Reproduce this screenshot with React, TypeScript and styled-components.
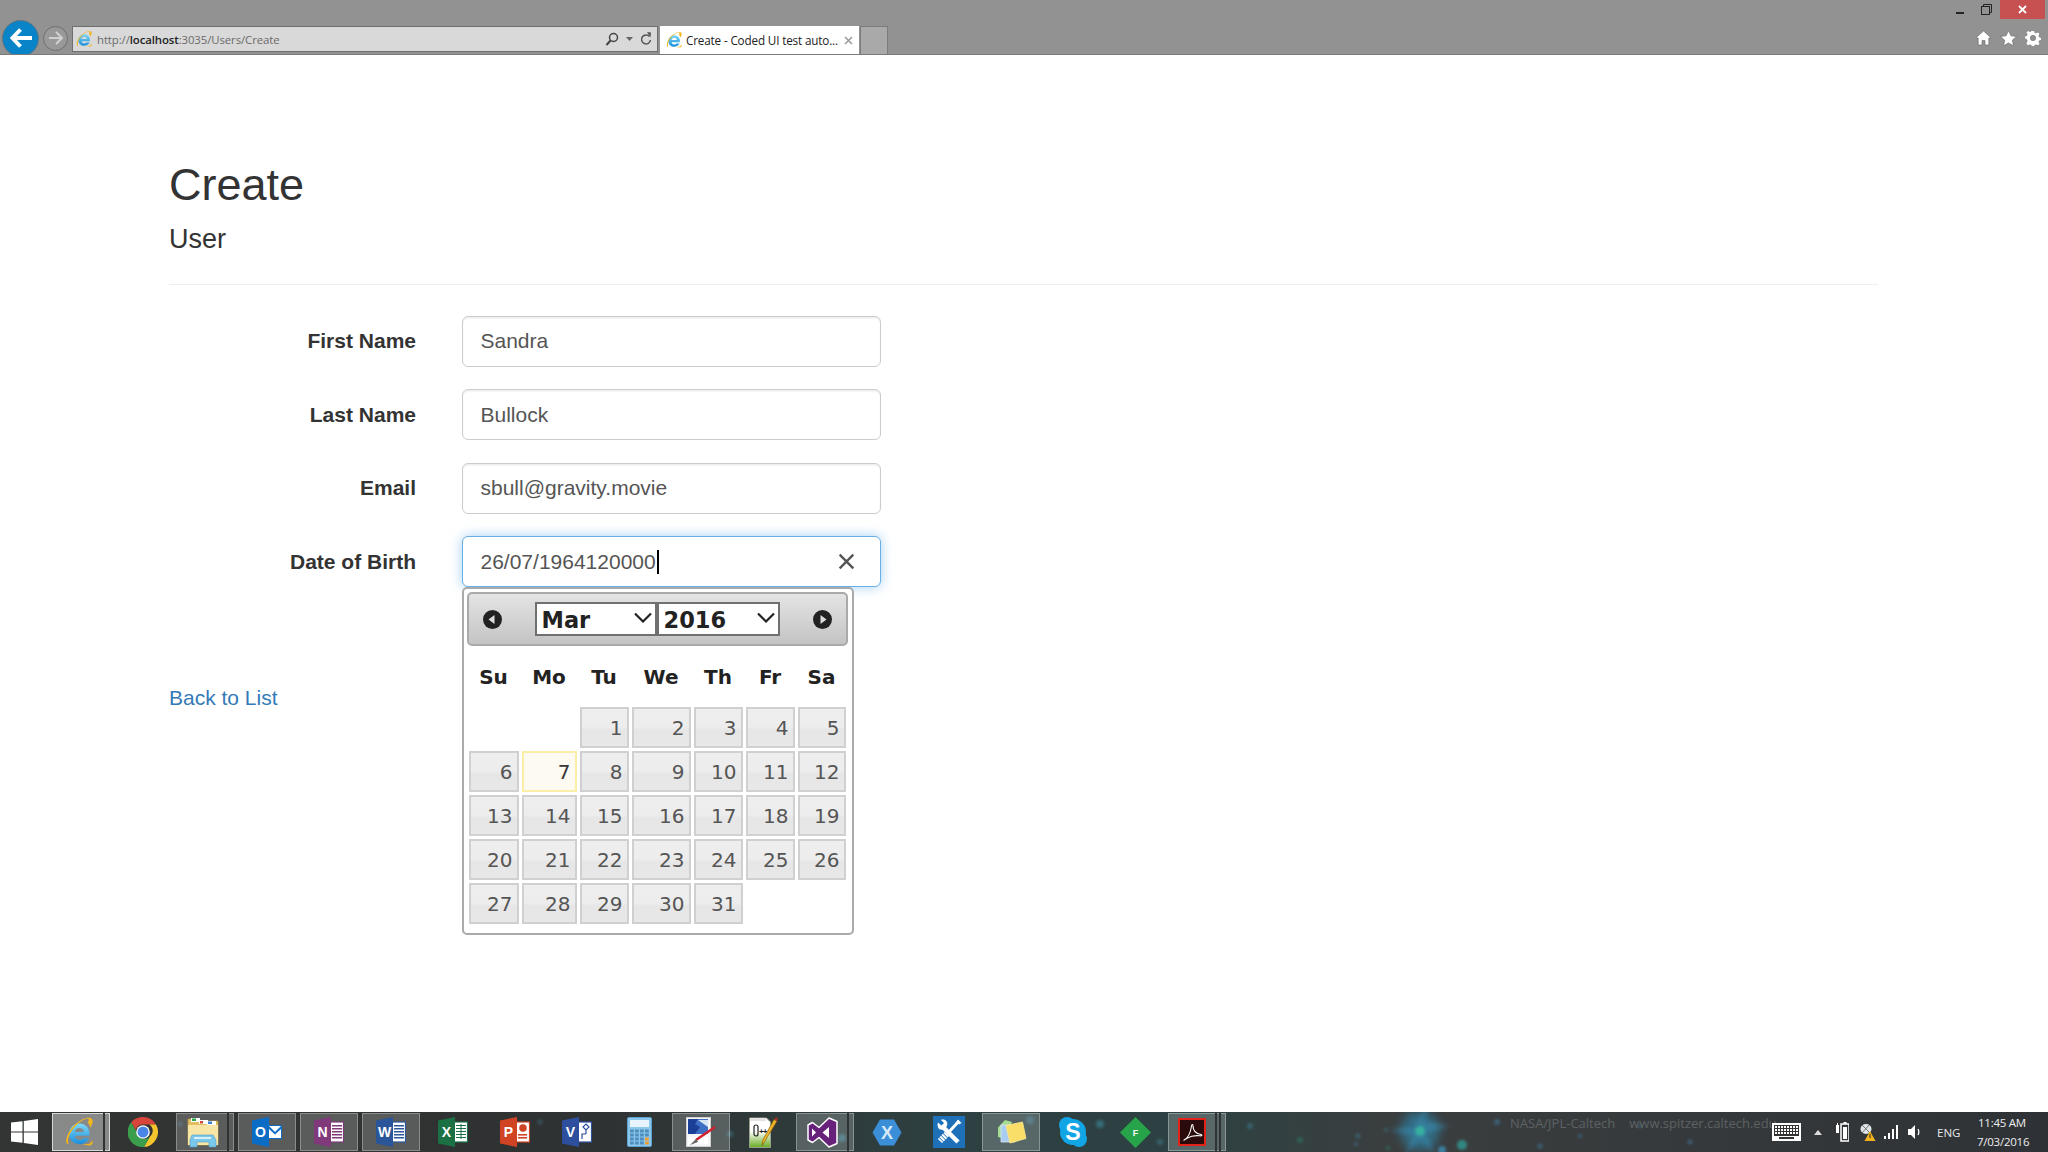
import React from "react";
import styled, { createGlobalStyle } from "styled-components";

const Global = createGlobalStyle`
  html, body { margin: 0; padding: 0; height: 100%; background: #fff; overflow: hidden; }
  #root { height: 100%; }
  * { box-sizing: border-box; }
`;

const Page = styled.div`
  height: 1152px;
  display: flex;
  flex-direction: column;
  font-family: "Liberation Sans", Arial, sans-serif;
  color: #333;
`;

/* ---------- browser chrome ---------- */
const Chrome = styled.header`
  position: relative;
  height: 55px;
  flex: none;
  background: #929292;
  border-bottom: 1px solid #7a7a7a;
  display: flex;
  align-items: flex-end;
  padding-left: 1px;
  overflow: hidden;
`;
const NavGroup = styled.div`
  display: flex;
  align-items: center;
  height: 32px;
  width: 71px;
  flex: none;
`;
const BackButton = styled.div`
  width: 37px;
  height: 37px;
  margin-left: 1px;
  border-radius: 50%;
  background: #0a84c8;
  border: 1.5px solid #66757c;
  display: flex;
  align-items: center;
  justify-content: center;
  flex: none;
`;
const ForwardButton = styled.div`
  width: 25px;
  height: 25px;
  margin-left: 4px;
  border-radius: 50%;
  background: #999;
  border: 1.5px solid #6f6f6f;
  display: flex;
  align-items: center;
  justify-content: center;
  flex: none;
`;
const AddressBar = styled.div`
  width: 586px;
  height: 26px;
  margin-bottom: 2px;
  background: #d9d9d9;
  border: 1px solid #6e6e6e;
  display: flex;
  align-items: center;
  padding: 0 5px 0 2px;
  gap: 4px;
  flex: none;
`;
const UrlText = styled.div`
  flex: 1;
  font-family: "Open Sans", sans-serif;
  font-size: 11.4px;
  letter-spacing: -0.1px;
  color: #6a6a6a;
  b { font-weight: 600; color: #222; }
`;
const BarTools = styled.div`
  display: flex;
  align-items: center;
  gap: 7px;
`;
const TabItem = styled.div`
  margin-left: 2px;
  width: 199px;
  height: 28px;
  background: #fff;
  display: flex;
  align-items: center;
  padding: 0 6px 0 5px;
  gap: 3px;
  flex: none;
`;
const TabTitle = styled.div`
  flex: 1;
  font-family: "Open Sans", sans-serif;
  font-size: 11.7px;
  letter-spacing: -0.15px;
  color: #222;
  white-space: nowrap;
`;
const NewTab = styled.div`
  margin-left: 1px;
  width: 28px;
  height: 28px;
  background: #a9a9a9;
  border: 1px solid #7c7c7c;
  border-bottom: none;
  flex: none;
`;
const WindowControls = styled.div`
  position: absolute;
  top: 0;
  right: 3px;
  display: flex;
  align-items: flex-start;
`;
const ControlBtn = styled.div`
  width: 26px;
  height: 19px;
  display: flex;
  align-items: center;
  justify-content: center;
`;
const CloseBtn = styled.div`
  width: 45px;
  height: 19px;
  margin-left: 1px;
  background: #c75050;
  display: flex;
  align-items: center;
  justify-content: center;
`;
const ToolIcons = styled.div`
  position: absolute;
  right: 7px;
  top: 30px;
  display: flex;
  gap: 8px;
  align-items: center;
`;

/* ---------- page ---------- */
const Main = styled.main`
  flex: 1;
  padding: 105px 170px 0 169px;
`;
const Title = styled.h2`
  margin: 0;
  font-size: 45px;
  font-weight: 400;
  line-height: 49.5px;
  color: #333;
`;
const Subtitle = styled.h4`
  margin: 15px 0 0;
  font-size: 27px;
  font-weight: 400;
  line-height: 29.7px;
  color: #333;
`;
const Rule = styled.hr`
  margin: 30px 0 30.5px;
  border: none;
  border-top: 1.5px solid #eee;
`;
const Form = styled.form`
  display: flex;
  flex-direction: column;
  gap: 22.5px;
`;
const Row = styled.div`
  display: grid;
  grid-template-columns: 247px 419px;
  column-gap: 45.5px;
  align-items: center;
`;
const Label = styled.label`
  font-size: 21px;
  font-weight: 700;
  text-align: right;
  color: #333;
`;
const Input = styled.input`
  width: 100%;
  height: 51px;
  padding: 0 18px;
  font: 400 21px "Liberation Sans", Arial, sans-serif;
  color: #555;
  background: #fff;
  border: 1.5px solid #ccc;
  border-radius: 6px;
  box-shadow: inset 0 1.5px 1.5px rgba(0, 0, 0, 0.075);
  outline: none;
`;
const DateWrap = styled.div`
  position: relative;
`;
const DateField = styled.div`
  height: 51px;
  padding: 0 18px;
  font-size: 21px;
  color: #555;
  background: #fff;
  border: 1.5px solid #66afe9;
  border-radius: 6px;
  box-shadow: 0 0 12px rgba(102, 175, 233, 0.6);
  display: flex;
  align-items: center;
`;
const Caret = styled.span`
  display: inline-block;
  width: 2px;
  height: 24px;
  background: #000;
  margin-left: 1px;
`;
const ClearIcon = styled.svg`
  margin-left: auto;
  margin-right: 7px;
  width: 17px;
  height: 17px;
  flex: none;
`;
const BackLink = styled.a`
  display: block;
  margin-top: 96px;
  font-size: 21px;
  line-height: 30px;
  color: #337ab7;
  text-decoration: none;
`;

/* ---------- datepicker ---------- */
const Calendar = styled.div`
  position: absolute;
  left: 0;
  top: 100%;
  width: 392px;
  height: 348px;
  background: #fff;
  border: 2px solid #aaa;
  border-radius: 5px;
  padding: 3px 4px 3px 3px;
  font-family: "DejaVu Sans", Verdana, sans-serif;
  z-index: 2;
`;
const CalHeader = styled.div`
  height: 54px;
  border: 2px solid #aaa;
  border-radius: 5px;
  background: linear-gradient(#e4e4e4, #c4c4c4);
  display: flex;
  align-items: center;
  justify-content: space-between;
  padding: 0 14px;
`;
const SelectGroup = styled.div`
  display: flex;
`;
const SelectWrap = styled.div`
  position: relative;
  width: ${(p) => p.$w}px;
  height: 34px;
`;
const Select = styled.select`
  appearance: none;
  width: 100%;
  height: 100%;
  padding: 2px 0 0 5px;
  border: 2px solid #707070;
  border-radius: 0;
  background: #fff;
  font: 700 22.5px "DejaVu Sans", Verdana, sans-serif;
  color: #222;
  outline: none;
`;
const Chevron = styled.svg`
  position: absolute;
  right: 5px;
  top: 10px;
  width: 18px;
  height: 11px;
  pointer-events: none;
`;
const Grid = styled.div`
  display: grid;
  grid-template-columns: 50px 55px 49px 59px 49px 49px 48px;
  column-gap: 3px;
  margin-left: 2px;
`;
const WeekHead = styled(Grid)`
  margin-top: 9px;
  margin-bottom: 8px;
`;
const Weekday = styled.div`
  height: 44px;
  display: flex;
  align-items: center;
  justify-content: center;
  font-size: 20px;
  font-weight: 700;
  color: #222;
`;
const DayGrid = styled(Grid)`
  grid-auto-rows: 41px;
  row-gap: 3px;
`;
const Day = styled.div`
  display: flex;
  align-items: center;
  justify-content: flex-end;
  padding-right: 4px;
  font-size: 20px;
  color: ${(p) => (p.$today ? "#363636" : "#555")};
  border: 2px solid ${(p) => (p.$today ? "#fbeea6" : "#d0d0d0")};
  background: ${(p) =>
    p.$today
      ? "#fcfaf1"
      : "linear-gradient(#eeeeee 0%, #ededed 48%, #e6e6e6 58%, #e8e8e8 100%)"};
`;
const DayBlank = styled.div``;

/* ---------- taskbar ---------- */
const Taskbar = styled.footer`
  position: relative;
  height: 40px;
  flex: none;
  display: flex;
  align-items: stretch;
  overflow: hidden;
  background: linear-gradient(
    to right,
    #333434 0,
    #2f3232 600px,
    #2e4041 950px,
    #2e4142 1200px,
    #3b3e3f 1400px,
    #36393b 1700px,
    #2e3236 2048px
  );
`;
const Stars = styled.svg`
  position: absolute;
  left: 0;
  top: 0;
  width: 2048px;
  height: 40px;
  pointer-events: none;
`;
const Wallpaper = styled.div`
  position: absolute;
  left: 1510px;
  top: 2px;
  display: flex;
  gap: 14px;
  font-family: "Open Sans", sans-serif;
  font-size: 13px;
  color: #5c6264;
  white-space: nowrap;
`;
const StartButton = styled.div`
  position: relative;
  width: 48px;
  flex: none;
  display: flex;
  align-items: center;
  justify-content: center;
`;
const TaskItems = styled.div`
  position: relative;
  display: flex;
  gap: 4px;
  margin-left: 4px;
  padding: 1px 0;
`;
const TaskItem = styled.div`
  position: relative;
  width: 58px;
  display: flex;
  align-items: center;
  justify-content: center;
  padding-right: ${(p) => (p.$stack ? p.$stack * 5 : 0)}px;
  background: ${(p) =>
    p.$active ? "rgba(255,255,255,.42)" : p.$running ? "rgba(255,255,255,.2)" : "transparent"};
  border: ${(p) =>
    p.$active ? "1.5px solid #d8d8d8" : p.$running ? "1.5px solid rgba(255,255,255,.3)" : "none"};
`;
const StackEdge = styled.span`
  position: absolute;
  top: -1.5px;
  bottom: -1.5px;
  right: ${(p) => p.$r}px;
  width: 2px;
  background: #303333;
`;
const Tray = styled.div`
  position: absolute;
  right: 0;
  top: 0;
  bottom: 0;
  width: 276px;
  display: flex;
  align-items: center;
`;
const TrayIcon = styled.div`
  flex: none;
  display: flex;
  justify-content: center;
  width: ${(p) => p.$w}px;
  margin-right: ${(p) => p.$m || 0}px;
`;
const Lang = styled.div`
  font-family: "Open Sans", sans-serif;
  font-size: 11.5px;
  color: #e8e8e8;
  margin-left: 14px;
  width: 40px;
`;
const Clock = styled.div`
  font-family: "Open Sans", sans-serif;
  font-size: 11.5px;
  letter-spacing: -0.25px;
  line-height: 19px;
  color: #eee;
  text-align: center;
  width: 50px;
  white-space: nowrap;
`;

/* ---------- icons ---------- */
const IE = ({ s = 32 }: { s?: number }) => (
  <svg width={s} height={s} viewBox="0 0 32 32">
    <defs>
      <linearGradient id="ieBlue" x1="0" y1="0" x2="0" y2="1">
        <stop offset="0" stopColor="#7fd8f6" />
        <stop offset="1" stopColor="#1a8fdc" />
      </linearGradient>
    </defs>
    <path d="M16.500 7.500c-5.800 0-10.500 4.600-10.500 10.500 0 5.800 4.600 10 10.500 10 4.300 0 7.900-2.300 9.500-5.800h-5.700c-.9 1.100-2.200 1.600-3.700 1.600-2.500 0-4.500-1.500-4.800-4h14.500c.1-.7.200-1.300.2-2 0-6.100-4.500-10.300-10-10.300zm-4.700 8.500c.4-2.400 2.400-4 4.700-4s4.300 1.600 4.600 4z" fill="url(#ieBlue)" />
    <path d="M4.500 28.500C1 25 5 15 12 8.500c6.500-6 14.500-8.500 17-5.500 1.800 2.100-.1 6.300-1.800 8.700-.6-2.800-1.200-3.900-2.600-5.500 1.200-1.400 1.500-2.500 1-3-1.500-1.500-7.600 1.300-12.600 6.300C7.500 15 3.500 23.500 5.500 27z" fill="#f2b51c" />
    <path d="M20 28c3.500 1.800 7.500 2 9 .2.800-1.200.7-2.700.2-4-.7 1.700-1.500 2.500-2.500 3.200-1.600.8-4 .9-6.700.6z" fill="#f2b51c" />
  </svg>
);
const Win = () => (
  <svg width="27" height="26" viewBox="0 0 27 26" fill="#fff">
    <path d="M0 3.600 11.500 2.200v10.200H0zM12.800 2 27 0v12.400H12.800zM0 13.600h11.500v10.200L0 22.400zM12.800 13.600H27V26l-14.200-2z" />
  </svg>
);
const ChromeLogo = () => (
  <svg width="30" height="30" viewBox="0 0 30 30">
    <path d="M15 0a15 15 0 0 1 13 7.500H15a7.500 7.500 0 0 0-7.200 5.400L3.200 5.300A15 15 0 0 1 15 0z" fill="#d8453a" />
    <path d="M28 7.500A15 15 0 0 1 16 30l6-10.500a7.500 7.500 0 0 0-.6-12z" fill="#f6c42d" />
    <path d="M16 30A15 15 0 0 1 3.200 5.300L9 15.800a7.500 7.500 0 0 0 13 3.700z" fill="#3b9e4c" />
    <circle cx="15" cy="15" r="6.800" fill="#fff" />
    <circle cx="15" cy="15" r="5.500" fill="#4a86e8" />
  </svg>
);
const Explorer = () => (
  <svg width="32" height="32" viewBox="0 0 32 32">
    <path d="M1 3h10l2 2h18v24H1z" fill="#e3bf62" stroke="#b3964c" strokeWidth=".8" />
    <rect x="4" y="2" width="9" height="4" fill="#fff" />
    <rect x="5" y="2.500" width="4" height="2.500" fill="#29a745" />
    <rect x="12" y="4" width="9" height="4" fill="#fff" />
    <rect x="13" y="5" width="3" height="2.500" fill="#d04a35" />
    <rect x="20" y="5" width="9" height="4" fill="#fff" />
    <rect x="21" y="5.500" width="4" height="2.500" fill="#3a7fd0" />
    <path d="M1 9h30v20H1z" fill="#f7e6a6" />
    <path d="M5 19h21l3 5v7h-7v-5H10v5H3v-7z" fill="#7cc8ec" stroke="#4f9fca" strokeWidth=".6" />
    <rect x="7" y="21" width="17" height="2" fill="#d8f0fa" />
  </svg>
);
const OfficeShell = ({ dark, letter, children }: { dark: string; letter: string; children?: React.ReactNode }) => (
  <svg width="30" height="30" viewBox="0 0 30 30">
    <rect x="13" y="5" width="16.500" height="20" fill="#fff" stroke={dark} strokeWidth="1.200" />
    {children}
    <path d="M0 3.500 17 0v30L0 26.500z" fill={dark} />
    <text x="8.500" y="20" textAnchor="middle" fontFamily="Liberation Sans, sans-serif" fontWeight="700" fontSize="14" fill="#fff">
      {letter}
    </text>
  </svg>
);
const Lines = ({ c }: { c: string }) => (
  <>
    {[8, 11, 14, 17, 20].map((y) => (
      <rect key={y} x="18" y={y} width="10" height="1.500" fill={c} />
    ))}
  </>
);
const Outlook = () => (
  <svg width="30" height="30" viewBox="0 0 30 30">
    <rect x="16" y="8" width="14" height="14" fill="#0a6cc4" />
    <path d="M17 9h12l-6 6z" fill="#fff" />
    <path d="M17 12l6 5.500 6-5.500v9H17z" fill="#fff" />
    <path d="M0 3.500 17 0v30L0 26.500z" fill="#0a6cc4" />
    <text x="8.500" y="20" textAnchor="middle" fontFamily="Liberation Sans, sans-serif" fontWeight="700" fontSize="14" fill="#fff">
      O
    </text>
  </svg>
);
const Excel = () => (
  <OfficeShell dark="#1b7044" letter="X">
    {[8, 11, 14, 17, 20].map((y) => (
      <rect key={y} x="18" y={y} width="10" height="1" fill="#1b7044" />
    ))}
    <rect x="22.500" y="7" width="1" height="15" fill="#1b7044" />
  </OfficeShell>
);
const Ppt = () => (
  <OfficeShell dark="#d04423" letter="P">
    <circle cx="23" cy="11" r="3.800" fill="#d04423" />
    <rect x="18" y="17" width="9" height="1.600" fill="#d04423" />
    <rect x="18" y="20" width="9" height="1.600" fill="#d04423" />
  </OfficeShell>
);
const Visio = () => (
  <OfficeShell dark="#2d4f9e" letter="V">
    <path d="M24 7l3 3-3 3-3-3zM24 13v4M20 22v-5h4" stroke="#2d4f9e" strokeWidth="1.200" fill="none" />
  </OfficeShell>
);
const Calc = () => (
  <svg width="25" height="30" viewBox="0 0 25 30">
    <rect x=".5" y=".5" width="24" height="29" rx="1.500" fill="#8cc6ea" stroke="#5da3cf" />
    <rect x="3" y="3" width="19" height="7" fill="#e8f4fb" />
    {[12.500, 16.500, 20.500, 24.500].map((y) =>
      [3, 8, 13, 18].map((x) => (
        <rect key={`${x}-${y}`} x={x} y={y} width="3.800" height="3" fill={x === 18 && y > 18 ? "#f0a030" : "#4f8fbd"} />
      ))
    )}
  </svg>
);
const PaintIcon = () => (
  <svg width="30" height="30" viewBox="0 0 30 30">
    <rect x="0.500" y=".5" width="24" height="29" fill="#f6f6f6" stroke="#cfcfcf" />
    <path d="M2 2h20v15H2z" fill="#3f6fc4" />
    <path d="M2 2h10l-3 5 5 3-5 7H2z" fill="#1c3f96" />
    <path d="M12 3h10v7z" fill="#d6e4f6" />
    <rect x="2" y="20" width="20" height="7" fill="#fff" />
    <path d="M29 10 10 23" stroke="#d2202c" strokeWidth="2.500" />
    <path d="M10 22 4 28l8-3z" fill="#666" />
  </svg>
);
const NotepadPP = () => (
  <svg width="29" height="32" viewBox="0 0 29 32">
    <defs>
      <linearGradient id="nppGreen" x1="0" y1="0" x2="0" y2="1">
        <stop offset="0.450" stopColor="#fff" />
        <stop offset="1" stopColor="#66ad1f" />
      </linearGradient>
    </defs>
    <path d="M.5 2h17l4 4v25.500H.5z" fill="url(#nppGreen)" stroke="#9aa08e" />
    <rect x="1" y="2" width="16" height="3" fill="#e3e3e3" />
    <rect x="5" y="9" width="4" height="11" rx="2" fill="none" stroke="#222" strokeWidth="1.200" />
    <text x="10" y="18" fontFamily="Liberation Mono, monospace" fontWeight="700" fontSize="8" fill="#222" letterSpacing="-1">
      ++
    </text>
    <path d="M28 5 16 25l-3 5 .8-6L25 3.500z" fill="#f0b429" stroke="#8a6410" strokeWidth=".7" />
    <path d="M25 3.500l3 1.700 1-2.500-2-1.500z" fill="#a0322a" />
  </svg>
);
const VS = () => (
  <svg width="31" height="31" viewBox="0 0 31 31">
    <path d="M22 1 30 4.500v22L22 30 12 20.500 5.500 25.500 1 23V8l4.500-2.500L12 10.500z" fill="#68217a" stroke="#fff" strokeWidth="1.500" strokeLinejoin="round" />
    <path d="M22 10v11l-6.500-5.500zM5 11.500l4 4-4 4z" fill="#fff" />
  </svg>
);
const Xamarin = () => (
  <svg width="30" height="27" viewBox="0 0 30 27">
    <path d="M8 .5h14L29.500 13.500 22 26.500H8L.5 13.500z" fill="#3a8fd8" />
    <text x="15" y="20" textAnchor="middle" fontFamily="Liberation Sans, sans-serif" fontWeight="700" fontSize="18" fill="#d7e9f7">
      X
    </text>
  </svg>
);
const Tools = () => (
  <svg width="32" height="32" viewBox="0 0 32 32">
    <rect width="32" height="32" fill="#1e70b8" />
    <path d="M10 11 25 26" stroke="#fff" strokeWidth="4.500" />
    <path d="M5 6.500l3.500 3L11 7 8 4c3.500-1.500 7.500 1.500 6 6l-3.500 3.500C6 15 3.500 10.500 5 6.500z" fill="#fff" />
    <path d="M26 5 15 17" stroke="#fff" strokeWidth="3" />
    <path d="M25 3.500l3.500 3.500-2.500 1.500-2.500-2.500z" fill="#fff" />
    <path d="M14 18 7 25" stroke="#fff" strokeWidth="6" strokeDasharray="2 .8" />
  </svg>
);
const Sticky = () => (
  <svg width="32" height="26" viewBox="0 0 32 26">
    <path d="M3 8.500 10 1l7 2-6 17-8-2z" fill="#a6dc8f" />
    <path d="M6 6h14v17H6z" fill="#a8cdf0" stroke="#d4e6f7" strokeWidth=".8" />
    <path d="M11 6.500 27.500 3 31 19.500 15 24z" fill="#f9de6a" stroke="#fbe98f" strokeWidth=".8" />
  </svg>
);
const Skype = () => (
  <svg width="28" height="30" viewBox="0 0 28 30">
    <circle cx="8" cy="8" r="8" fill="#12a5e6" />
    <circle cx="20" cy="22" r="8" fill="#12a5e6" />
    <circle cx="14" cy="15" r="13" fill="#12a5e6" />
    <text x="14" y="23" textAnchor="middle" fontFamily="Liberation Sans, sans-serif" fontWeight="700" fontSize="23" fill="#fff">
      S
    </text>
  </svg>
);
const Diamond = () => (
  <svg width="31" height="31" viewBox="0 0 31 31">
    <path d="M15.500 0 31 15.500 15.500 31 0 15.500z" fill="#27a34a" />
    <text x="15.500" y="19" textAnchor="middle" fontFamily="Liberation Sans, sans-serif" fontWeight="700" fontSize="9" fill="#fff">
      F
    </text>
  </svg>
);
const Acrobat = () => (
  <svg width="28" height="28" viewBox="0 0 28 28">
    <rect x="1" y="1" width="26" height="26" fill="#2a0a0a" stroke="#e2231a" strokeWidth="2" />
    <path d="M6 22c4-2 6.500-7 7.500-14 .3-2 1.500-2 1.500 0 0 4.500 2.500 7.500 8 8.500 1.500.5 1 1.500-1 1.300-5-.5-9 0-13 2.400-2 1.300-3.500 2.500-3 1.800z" fill="none" stroke="#fff" strokeWidth="1.100" />
  </svg>
);
const Keyboard = () => (
  <svg width="29" height="18" viewBox="0 0 29 18">
    <rect x=".5" y=".5" width="28" height="17" fill="#fff" stroke="#fff" />
    <rect x="2" y="2" width="25" height="11" fill="#333" />
    {[3, 6, 9].map((y) =>
      [3, 6, 9, 12, 15, 18, 21, 24].map((x) => (
        <rect key={`${x}${y}`} x={x} y={y} width="2" height="2" fill="#fff" />
      ))
    )}
    <rect x="7" y="14" width="15" height="2" fill="#333" />
  </svg>
);
const Battery = () => (
  <svg width="13" height="20" viewBox="0 0 13 20">
    <rect x="0" y="3" width="3" height="8" fill="#fff" />
    <rect x="1" y="1" width="1" height="3" fill="#fff" />
    <rect x="5" y="2" width="8" height="17" fill="none" stroke="#fff" strokeWidth="1.500" />
    <rect x="7" y="5" width="4" height="12" fill="#fff" />
    <rect x="7.500" y="0" width="3" height="2" fill="#fff" />
  </svg>
);
const Warn = () => (
  <svg width="16" height="18" viewBox="0 0 16 18">
    <ellipse cx="6" cy="6" rx="5.500" ry="5" fill="#dfe4e6" />
    <path d="M2 2l8 8M9 2 2 10" stroke="#777" strokeWidth="1" />
    <path d="M10 8l5.500 10H4.500z" fill="#f2b21b" />
    <rect x="9.500" y="11" width="1" height="4" fill="#222" />
  </svg>
);
const Signal = () => (
  <svg width="15" height="14" viewBox="0 0 15 14" fill="#fff">
    <rect x="0" y="11" width="2" height="3" />
    <rect x="4" y="8" width="2" height="6" />
    <rect x="8" y="4" width="2" height="10" />
    <rect x="12" y="0" width="2" height="14" />
  </svg>
);
const Speaker = () => (
  <svg width="15" height="16" viewBox="0 0 15 16" fill="none">
    <path d="M0 5h3l4-4v14l-4-4H0z" fill="#fff" />
    <path d="M10 5c1.200 2 1.200 4 0 6" stroke="#fff" strokeWidth="1.200" />
  </svg>
);
const HomeIcon = () => (
  <svg width="17" height="16" viewBox="0 0 17 16">
    <path d="M8.500 1 0.800 8h2.400v7h3.800v-4.500h3V15h3.800V8h2.400z" fill="#fff" stroke="#666" strokeWidth=".6" />
  </svg>
);
const StarIcon = () => (
  <svg width="17" height="16" viewBox="0 0 17 16">
    <path d="m8.500.5 2.400 5.300 5.600.6-4.200 3.800 1.200 5.600-5-2.900-5 2.900 1.200-5.600L.5 6.400l5.600-.6z" fill="#fff" stroke="#666" strokeWidth=".6" />
  </svg>
);
const GearIcon = () => (
  <svg width="16" height="16" viewBox="0 0 16 16">
    <path d="M6.600.5h2.800l.4 2 1.300.6 1.800-1.100 2 2-1.100 1.800.6 1.300 2 .4v2.800l-2 .4-.6 1.300 1.100 1.800-2 2-1.800-1.100-1.300.6-.4 2H6.600l-.4-2-1.300-.6-1.800 1.100-2-2L2.200 10.600l-.6-1.300-2-.4V6.100l2-.4.6-1.300L1.100 2.600l2-2 1.800 1.100 1.300-.6zM8 5.300a2.700 2.700 0 1 0 0 5.400 2.700 2.700 0 0 0 0-5.400z" fill="#fff" stroke="#666" strokeWidth=".5" fillRule="evenodd" />
  </svg>
);
const NavArrow = ({ dir }: { dir: "l" | "r" }) => (
  <svg width="19" height="19" viewBox="0 0 19 19">
    <circle cx="9.500" cy="9.500" r="9.500" fill="#222" />
    <path d={dir === "l" ? "M11.500 5v9l-6-4.500z" : "M7.500 5v9l6-4.500z"} fill="#ddd" />
  </svg>
);
const ChevronDown = () => (
  <Chevron viewBox="0 0 18 11">
    <path d="M1 1.500 9 9.500l8-8" fill="none" stroke="#222" strokeWidth="2.200" />
  </Chevron>
);

const weekdays = ["Su", "Mo", "Tu", "We", "Th", "Fr", "Sa"];
const days = Array.from({ length: 31 }, (_, i) => i + 1);

const taskApps: { key: string; icon: React.ReactNode; running?: boolean; active?: boolean; stack?: number }[] = [
  { key: "ie", icon: <IE s={32} />, active: true, stack: 1 },
  { key: "chrome", icon: <ChromeLogo /> },
  { key: "explorer", icon: <Explorer />, running: true, stack: 1 },
  { key: "outlook", icon: <Outlook />, running: true },
  { key: "onenote", icon: <OfficeShell dark="#80397b" letter="N"><Lines c="#80397b" /></OfficeShell>, running: true },
  { key: "word", icon: <OfficeShell dark="#2a5699" letter="W"><Lines c="#2a5699" /></OfficeShell>, running: true },
  { key: "excel", icon: <Excel /> },
  { key: "ppt", icon: <Ppt /> },
  { key: "visio", icon: <Visio /> },
  { key: "calc", icon: <Calc /> },
  { key: "paint", icon: <PaintIcon />, running: true },
  { key: "npp", icon: <NotepadPP /> },
  { key: "vs", icon: <VS />, running: true, stack: 1 },
  { key: "xamarin", icon: <Xamarin /> },
  { key: "tools", icon: <Tools /> },
  { key: "sticky", icon: <Sticky />, running: true },
  { key: "skype", icon: <Skype /> },
  { key: "diamond", icon: <Diamond /> },
  { key: "acrobat", icon: <Acrobat />, running: true, stack: 2 },
];

const specks: [number, number, number, string][] = [
  [1462, 33, 5, "#2fa8a0"], [1442, 38, 4, "#3a9ac8"], [1497, 10, 3, "#3d6f90"], [1358, 24, 2.5, "#3d7080"],
  [1386, 18, 2, "#3d7080"], [1356, 32, 2, "#3d6f90"], [1388, 36, 2, "#2f7a60"],
  [1100, 12, 4, "#3a7f90"], [1030, 8, 4, "#3a7080"], [960, 10, 3, "#3a7f80"], [842, 26, 4, "#3a7f90"],
  [730, 22, 3, "#3a7080"], [1160, 30, 3, "#3a7080"], [1250, 14, 3, "#3a7080"], [1300, 28, 3, "#2f7060"],
  [1540, 34, 2.5, "#3d6f90"], [1580, 24, 2, "#3d6f90"], [1690, 30, 2.5, "#3d6f90"], [1640, 14, 2, "#3d6f90"],
  [180, 12, 2.5, "#3d5f70"], [20, 14, 3, "#3d5560"], [260, 30, 2, "#3d5560"], [540, 10, 2.5, "#3d6070"],
];

export default function App() {
  return (
    <Page>
      <Global />
      <Chrome>
        <NavGroup>
          <BackButton>
            <svg width="22" height="20" viewBox="0 0 22 20">
              <path d="M10.500 1.500 2.500 10l8 8.500M3 10h19" fill="none" stroke="#fff" strokeWidth="4" />
            </svg>
          </BackButton>
          <ForwardButton>
            <svg width="15" height="14" viewBox="0 0 15 14">
              <path d="M8 1l6 6-6 6M14 7H1" fill="none" stroke="#d0d0d0" strokeWidth="2" />
            </svg>
          </ForwardButton>
        </NavGroup>
        <AddressBar>
          <IE s={18} />
          <UrlText>
            http://<b>localhost</b>:3035/Users/Create
          </UrlText>
          <BarTools>
            <svg width="14" height="14" viewBox="0 0 14 14">
              <circle cx="8.500" cy="5.500" r="4" fill="none" stroke="#444" strokeWidth="1.500" />
              <path d="M5.500 8.500 1.500 13" stroke="#444" strokeWidth="2" />
            </svg>
            <svg width="7" height="4" viewBox="0 0 7 4">
              <path d="M0 0h7L3.500 4z" fill="#666" />
            </svg>
            <svg width="12" height="14" viewBox="0 0 12 14">
              <path d="M9.500 4.500A4.500 4.500 0 1 0 10.500 8" fill="none" stroke="#555" strokeWidth="1.500" />
              <path d="M7 0l4 .5-.5 5z" fill="#555" />
            </svg>
          </BarTools>
        </AddressBar>
        <TabItem>
          <IE s={18} />
          <TabTitle>Create - Coded UI test auto...</TabTitle>
          <svg width="9" height="9" viewBox="0 0 9 9">
            <path d="M1 1l7 7M8 1 1 8" stroke="#999" strokeWidth="1.500" />
          </svg>
        </TabItem>
        <NewTab />
        <WindowControls>
          <ControlBtn>
            <svg width="10" height="10" viewBox="0 0 10 10">
              <rect x="1" y="7" width="8" height="2" fill="#222" />
            </svg>
          </ControlBtn>
          <ControlBtn>
            <svg width="11" height="11" viewBox="0 0 11 11" fill="none" stroke="#222">
              <rect x=".5" y="2.500" width="8" height="8" />
              <path d="M2.500 2.500v-2h8v8h-2" />
            </svg>
          </ControlBtn>
          <CloseBtn>
            <svg width="9" height="9" viewBox="0 0 9 9">
              <path d="M1 1l7 7M8 1 1 8" stroke="#fff" strokeWidth="1.800" />
            </svg>
          </CloseBtn>
        </WindowControls>
        <ToolIcons>
          <HomeIcon />
          <StarIcon />
          <GearIcon />
        </ToolIcons>
      </Chrome>

      <Main>
        <Title>Create</Title>
        <Subtitle>User</Subtitle>
        <Rule />
        <Form>
          <Row>
            <Label>First Name</Label>
            <Input readOnly value="Sandra" />
          </Row>
          <Row>
            <Label>Last Name</Label>
            <Input readOnly value="Bullock" />
          </Row>
          <Row>
            <Label>Email</Label>
            <Input readOnly value="sbull@gravity.movie" />
          </Row>
          <Row>
            <Label>Date of Birth</Label>
            <DateWrap>
              <DateField>
                26/07/1964120000
                <Caret />
                <ClearIcon viewBox="0 0 15 15">
                  <path d="M1.500 1.500l12 12M13.500 1.500l-12 12" stroke="#555" strokeWidth="2.100" />
                </ClearIcon>
              </DateField>
              <Calendar>
                <CalHeader>
                  <NavArrow dir="l" />
                  <SelectGroup>
                    <SelectWrap $w={122}>
                      <Select defaultValue="Mar">
                        <option>Mar</option>
                      </Select>
                      <ChevronDown />
                    </SelectWrap>
                    <SelectWrap $w={123}>
                      <Select defaultValue="2016">
                        <option>2016</option>
                      </Select>
                      <ChevronDown />
                    </SelectWrap>
                  </SelectGroup>
                  <NavArrow dir="r" />
                </CalHeader>
                <WeekHead>
                  {weekdays.map((d) => (
                    <Weekday key={d}>{d}</Weekday>
                  ))}
                </WeekHead>
                <DayGrid>
                  <DayBlank />
                  <DayBlank />
                  {days.map((d) => (
                    <Day key={d} $today={d === 7}>
                      {d}
                    </Day>
                  ))}
                </DayGrid>
              </Calendar>
            </DateWrap>
          </Row>
        </Form>
        <BackLink href="#">Back to List</BackLink>
      </Main>

      <Taskbar>
        <Stars viewBox="0 0 2048 40">
          <defs>
            <filter id="soft" x="-60%" y="-60%" width="220%" height="220%">
              <feGaussianBlur stdDeviation="1.600" />
            </filter>
            <filter id="softer" x="-60%" y="-60%" width="220%" height="220%">
              <feGaussianBlur stdDeviation="5" />
            </filter>
            <filter id="spike" x="-30%" y="-30%" width="160%" height="160%">
              <feGaussianBlur stdDeviation="2.600" />
            </filter>
          </defs>
          <circle cx="1420" cy="19" r="20" fill="#2f7c9c" opacity=".7" filter="url(#softer)" />
          <path
            d="M1420 19 1404-4 1416 10 1428-6 1424 10 1450 14 1425 21 1436 44 1420 27 1404 44 1414 23 1388 18 1414 15z"
            fill="#3a8fb4"
            opacity=".55"
            filter="url(#spike)"
          />
          <circle cx="1420" cy="19" r="5" fill="#34b0a0" filter="url(#soft)" />
          {specks.map(([x, y, r, c]) => (
            <circle key={`${x}-${y}`} cx={x} cy={y} r={r} fill={c} opacity=".7" filter="url(#soft)" />
          ))}
        </Stars>
        <Wallpaper>
          <span>NASA/JPL-Caltech</span>
          <span>www.spitzer.caltech.edu</span>
        </Wallpaper>
        <StartButton>
          <Win />
        </StartButton>
        <TaskItems>
          {taskApps.map((a) => (
            <TaskItem key={a.key} $active={a.active} $running={a.running} $stack={a.stack}>
              {a.icon}
              {a.stack ? <StackEdge $r={4} /> : null}
              {a.stack === 2 ? <StackEdge $r={8} /> : null}
            </TaskItem>
          ))}
        </TaskItems>
        <Tray>
          <TrayIcon $w={29} $m={10}>
            <Keyboard />
          </TrayIcon>
          <TrayIcon $w={14} $m={10}>
            <svg width="8" height="5" viewBox="0 0 8 5">
              <path d="M4 0l4 5H0z" fill="#ddd" />
            </svg>
          </TrayIcon>
          <TrayIcon $w={14} $m={10}>
            <Battery />
          </TrayIcon>
          <TrayIcon $w={18} $m={7}>
            <Warn />
          </TrayIcon>
          <TrayIcon $w={15} $m={9}>
            <Signal />
          </TrayIcon>
          <TrayIcon $w={15}>
            <Speaker />
          </TrayIcon>
          <Lang>ENG</Lang>
          <Clock>
            11:45 AM
            <br />
            7/03/2016
          </Clock>
        </Tray>
      </Taskbar>
    </Page>
  );
}
